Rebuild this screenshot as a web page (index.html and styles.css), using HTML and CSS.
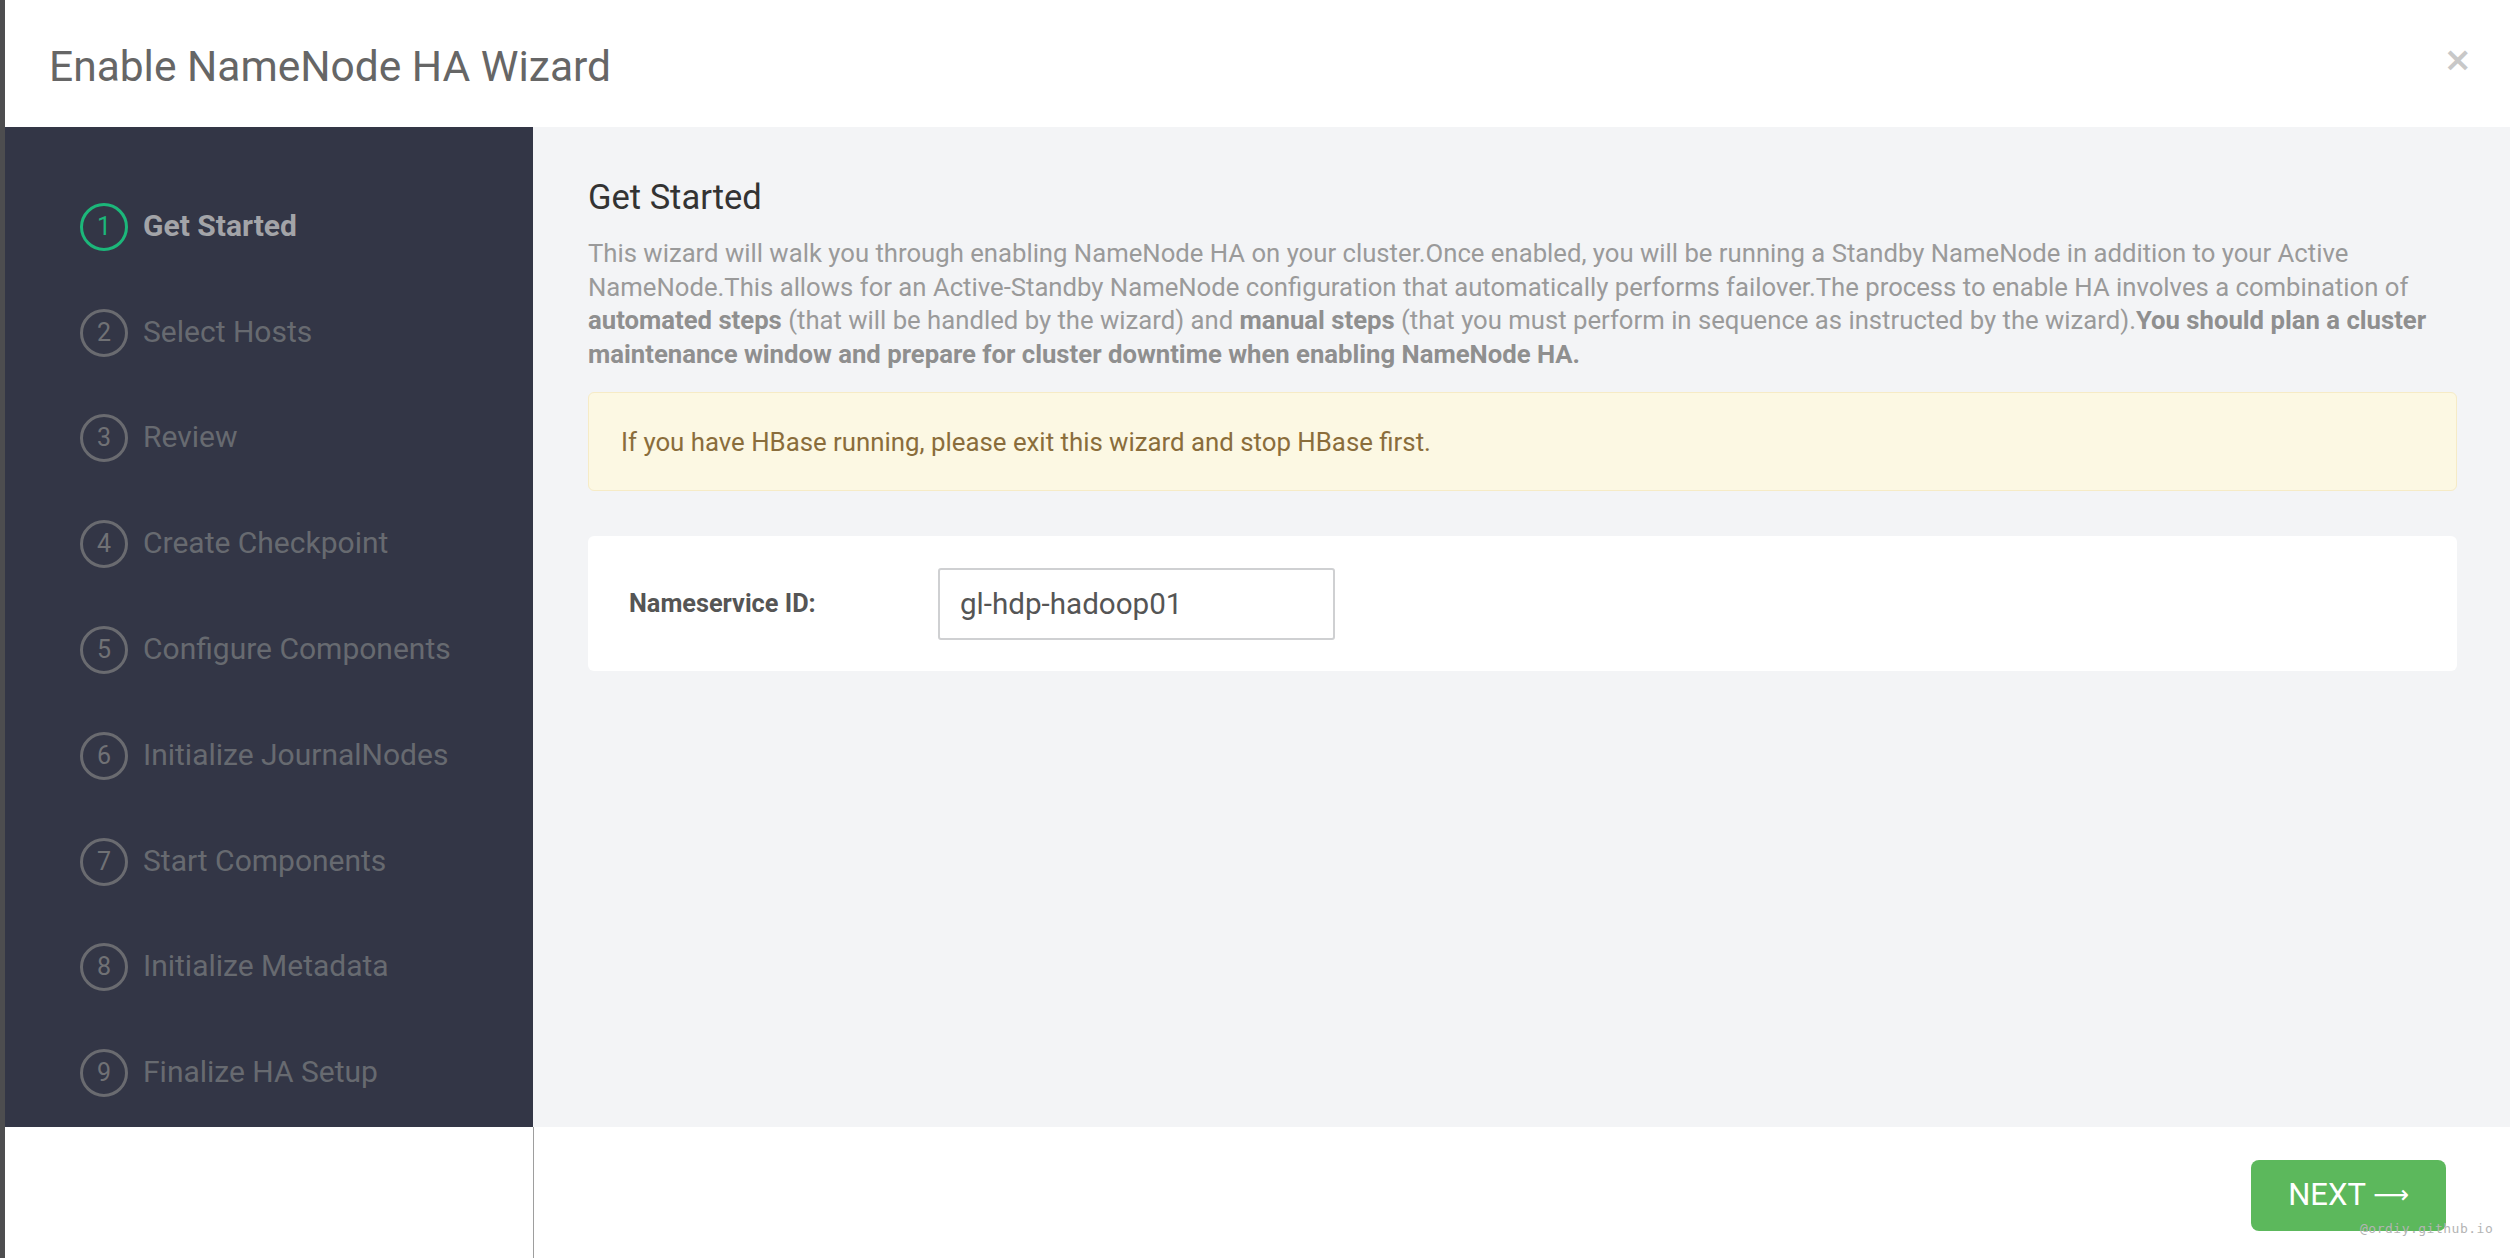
FILE: index.html
```html
<!DOCTYPE html>
<html lang="en">
<head>
<meta charset="utf-8">
<title>Enable NameNode HA Wizard</title>
<link rel="stylesheet" href="styles.css">
</head>
<body>
<div class="modal">
  <header class="modal-header">
    <h1 class="modal-title">Enable NameNode HA Wizard</h1>
    <button class="close" type="button">×</button>
  </header>
  <div class="modal-body">
    <nav class="steps">
      <ul class="step-list">
        <li class="step active"><span class="step-num">1</span><span class="step-label">Get Started</span></li>
        <li class="step"><span class="step-num">2</span><span class="step-label">Select Hosts</span></li>
        <li class="step"><span class="step-num">3</span><span class="step-label">Review</span></li>
        <li class="step"><span class="step-num">4</span><span class="step-label">Create Checkpoint</span></li>
        <li class="step"><span class="step-num">5</span><span class="step-label">Configure Components</span></li>
        <li class="step"><span class="step-num">6</span><span class="step-label">Initialize JournalNodes</span></li>
        <li class="step"><span class="step-num">7</span><span class="step-label">Start Components</span></li>
        <li class="step"><span class="step-num">8</span><span class="step-label">Initialize Metadata</span></li>
        <li class="step"><span class="step-num">9</span><span class="step-label">Finalize HA Setup</span></li>
      </ul>
    </nav>
    <main class="content">
      <h2 class="content-title">Get Started</h2>
      <p class="intro">This wizard will walk you through enabling NameNode HA on your cluster.Once enabled, you will be running a Standby NameNode in addition to your Active NameNode.This allows for an Active-Standby NameNode configuration that automatically performs failover.The process to enable HA involves a combination of <b>automated steps</b> (that will be handled by the wizard) and <b>manual steps</b> (that you must perform in sequence as instructed by the wizard).<b>You should plan a cluster maintenance window and prepare for cluster downtime when enabling NameNode HA.</b></p>
      <div class="alert">If you have HBase running, please exit this wizard and stop HBase first.</div>
      <div class="panel">
        <label class="field-label" for="nsid">Nameservice ID:</label>
        <input class="field-input" id="nsid" type="text" value="gl-hdp-hadoop01">
      </div>
    </main>
  </div>
  <footer class="modal-footer">
    <div class="footer-side"></div>
    <div class="footer-actions">
      <button class="btn-next" type="button">NEXT <span class="arrow">⟶</span></button>
    </div>
  </footer>
</div>
<span class="watermark">@ordiy.github.io</span>
</body>
</html>
```

FILE: styles.css
```css
* { box-sizing: border-box; }

html, body {
  margin: 0;
  padding: 0;
  height: 100%;
}

body {
  background: #4d4d4f;
  font-family: Roboto, "Liberation Sans", Arial, sans-serif;
  overflow: hidden;
  position: relative;
}

.modal {
  margin-left: 5px;
  height: 1258px;
  background: #ffffff;
  display: flex;
  flex-direction: column;
}

.modal-header {
  height: 127px;
  flex: none;
  display: flex;
  align-items: center;
  justify-content: space-between;
  padding: 0 38px 0 44px;
}

.modal-title {
  margin: 0;
  font-size: 42.5px;
  font-weight: 400;
  color: #666666;
  line-height: 1;
  padding-top: 7px;
}

.close {
  border: 0;
  background: none;
  padding: 0;
  font-family: "DejaVu Sans", sans-serif;
  font-size: 34px;
  font-weight: 700;
  color: #c8c8c8;
  line-height: 1;
  margin-bottom: 10px;
}

.modal-body {
  height: 1000px;
  flex: none;
  display: flex;
}

.steps {
  width: 528px;
  flex: none;
  background: #333646;
  padding: 47px 0 0 75px;
}

.step-list {
  list-style: none;
  margin: 0;
  padding: 0;
}

.step {
  height: 105.8px;
  display: flex;
  align-items: center;
  gap: 15px;
  color: #676a70;
  font-size: 30px;
}

.step-num {
  width: 48px;
  height: 48px;
  flex: none;
  border: 3.5px solid #6a6b70;
  border-radius: 50%;
  display: flex;
  align-items: center;
  justify-content: center;
  font-size: 25px;
  color: #707175;
  padding-bottom: 1px;
}

.step-label {
  line-height: 1;
  padding-bottom: 2px;
}

.step.active .step-num {
  border-color: #1cb77a;
  color: #1cb77a;
}

.step.active .step-label {
  font-weight: 700;
  color: #a3a4a8;
}

.content {
  flex: 1;
  background: #f3f4f6;
  padding: 50px 53px 0 55px;
}

.content-title {
  margin: 0;
  font-size: 34.5px;
  font-weight: 400;
  line-height: 40px;
  color: #333333;
}

.intro {
  margin: 20px 0 0;
  font-size: 25.7px;
  line-height: 33.6px;
  color: #9a9a9a;
}

.intro b {
  font-weight: 700;
  color: #8f8f8f;
}

.alert {
  margin-top: 21px;
  height: 99px;
  display: flex;
  align-items: center;
  padding: 0 32px;
  background: #fcf8e3;
  border: 1px solid #f6ebc6;
  border-radius: 6px;
  color: #8a6d3b;
  font-size: 25.8px;
}

.panel {
  margin-top: 45px;
  height: 135px;
  background: #ffffff;
  border-radius: 6px;
  display: flex;
  align-items: center;
  padding-left: 41px;
}

.field-label {
  width: 309px;
  flex: none;
  font-size: 25.3px;
  font-weight: 700;
  color: #555555;
}

.field-input {
  width: 397px;
  height: 72px;
  border: 2px solid #cfd0d2;
  border-radius: 3px;
  padding: 0 20px;
  font-family: Roboto, "Liberation Sans", Arial, sans-serif;
  font-size: 29.6px;
  color: #555555;
  background: #ffffff;
  outline: none;
}

.modal-footer {
  flex: 1;
  display: flex;
}

.footer-side {
  width: 529px;
  flex: none;
  border-right: 1px solid #9e9e9e;
}

.footer-actions {
  flex: 1;
  display: flex;
  justify-content: flex-end;
  align-items: flex-start;
  padding: 33px 64px 0 0;
}

.btn-next {
  width: 195px;
  height: 71px;
  border: 0;
  border-radius: 8px;
  background: #5cb85c;
  color: #ffffff;
  font-family: Roboto, "Liberation Sans", Arial, sans-serif;
  font-size: 31px;
  font-weight: 400;
  display: flex;
  align-items: center;
  justify-content: center;
  gap: 7px;
  padding: 0 0 2px;
}

.arrow {
  font-family: "DejaVu Sans", sans-serif;
  font-size: 25px;
  line-height: 1;
}

.watermark {
  position: absolute;
  left: 2360px;
  top: 1221px;
  font-family: "DejaVu Sans Mono", "Liberation Mono", monospace;
  font-size: 13px;
  color: #b4b4b4;
  letter-spacing: 0.5px;
}
```
